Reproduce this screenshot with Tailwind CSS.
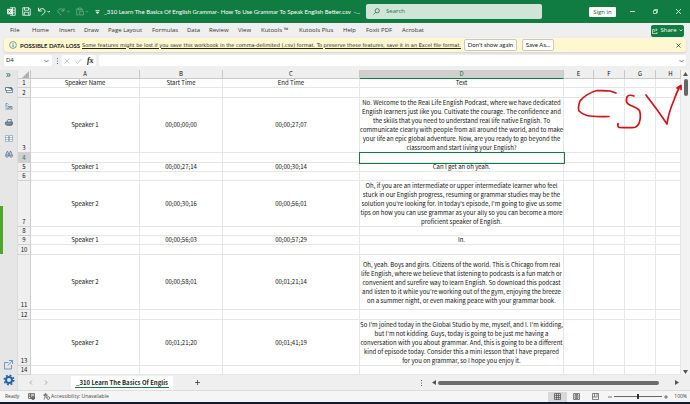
<!DOCTYPE html>
<html lang="en">
  <head>
    <meta charset="UTF-8" />
    <meta name="viewport" content="width=device-width, initial-scale=1.0" />
    <title>_310 Learn The Basics Of English Grammar - Excel</title>
    <script src="https://cdn.jsdelivr.net/npm/@tailwindcss/browser@4"></script>
  </head>

  <body
    class="flex min-h-screen flex-col overflow-hidden bg-[#efefef] font-['Open_Sans','Noto_Sans',sans-serif] text-[7px] leading-[9px] text-[#222]"
  >
    <!-- Title bar -->
    <header class="flex h-[23px] shrink-0 items-center bg-[#107c41] text-white">
      <div class="flex w-[104px] shrink-0 items-center gap-[6px] pl-[7px]">
        <svg class="h-[9px] w-[9px]" viewBox="0 0 18 18" fill="none" stroke="#fff" stroke-width="1.6">
          <path d="M6 1.500h10.500v15H6M11 1.500v15M6 6.500h10M6 11.500h10" />
          <path d="M1 4.500h8.500v9H1z" fill="#fff" />
          <path d="M3 6.500l4 5M7 6.500l-4 5" stroke="#107c41" />
        </svg>
        <button aria-label="Save" class="block">
          <svg class="h-[9px] w-[9px]" viewBox="0 0 18 18" fill="none" stroke="#fff" stroke-width="1.6">
            <path d="M1.500 1.500h12.500l2.500 2.500v12.500h-15zM5 1.500v5h8v-5M4.500 16.500v-6h9v6" />
          </svg>
        </button>
        <button aria-label="Undo" class="block">
          <svg class="h-[9px] w-[14px]" viewBox="0 0 28 18" fill="none" stroke="#fff" stroke-width="1.8">
            <path d="M3 1.500v6.500h6.500M3 8c3-5 8-6 11-3.500s2.500 5.500 0 8L9.500 17M21 8l2.500 2.500L26 8" />
          </svg>
        </button>
        <button aria-label="Redo" class="block opacity-40">
          <svg class="h-[9px] w-[13px]" viewBox="0 0 28 18" fill="none" stroke="#fff" stroke-width="1.800">
            <path d="M15 1.500v6.500H8.500M15 8c-3-5-8-6-11-3.500s-2.500 5.500 0 8L8.500 17M22 8l2.500 2.500L27 8" />
          </svg>
        </button>
        <button aria-label="Paste" class="block opacity-40">
          <svg class="h-[9px] w-[13px]" viewBox="0 0 28 18" fill="none" stroke="#fff" stroke-width="1.600">
            <path d="M6 16.500H1.500v-13H5M11 3.500h3V7M5 1.500h6v4H5zM8 8.500h8v8H8zM21 8l2.500 2.500L26 8" />
          </svg>
        </button>
        <button aria-label="Customize toolbar" class="block">
          <svg class="h-[6px] w-[5px]" viewBox="0 0 10 12" fill="#fff"><path d="M1 2h8v1.500H1zM1 5.500h8L5 10z" /></svg>
        </button>
      </div>
      <div class="flex w-[262px] whitespace-nowrap">
        <span class="font-[Lato,sans-serif] text-[6px]">_310 Learn The Basics Of English Grammar- How To Use Grammar To Speak English Better.csv&nbsp; -...</span>
      </div>
      <label class="flex h-[15px] w-[176px] items-center rounded-[2px] bg-[#cfe5d8] pl-[7px] text-[#185c37]">
        <svg class="h-[7px] w-[7px]" viewBox="0 0 14 14" fill="none" stroke="#185c37" stroke-width="1.400">
          <circle cx="8.500" cy="5.500" r="4.200" /><path d="M5.500 8.500L1 13" />
        </svg>
        <input aria-label="Search" placeholder="Search" class="ml-[6px] w-[120px] bg-transparent text-[6px] placeholder:text-[#28704a]" />
      </label>
      <div class="ml-auto flex items-center pr-[9px]">
        <button class="mr-[14px] h-[10px] w-[27px] rounded-[1px] bg-white text-[6px] leading-[10px] text-[#185c37]">Sign in</button>
        <button aria-label="Minimize" class="mr-[18px] block">
          <svg class="h-[5px] w-[5px]" viewBox="0 0 10 10" stroke="#fff" stroke-width="1.500"><path d="M0 5h10" /></svg>
        </button>
        <button aria-label="Restore" class="mr-[18px] block">
          <svg class="h-[5px] w-[5px]" viewBox="0 0 10 10" fill="none" stroke="#fff" stroke-width="1.300"><path d="M1 3h6v6H1zM3 3V1h6v6H7" /></svg>
        </button>
        <button aria-label="Close" class="block">
          <svg class="h-[5px] w-[5px]" viewBox="0 0 10 10" stroke="#fff" stroke-width="1.500"><path d="M0 0l10 10M10 0L0 10" /></svg>
        </button>
      </div>
    </header>

    <!-- Ribbon tabs -->
    <nav class="flex h-[15px] shrink-0 items-center gap-[11px] pr-[6px] pl-[10px] text-[6px] whitespace-nowrap text-[#333]">
      <a href="#" class="w-[11px]">File</a>
      <a href="#" class="w-[16px]">Home</a>
      <a href="#" class="w-[14px]">Insert</a>
      <a href="#" class="w-[13px]">Draw</a>
      <a href="#" class="w-[33px]">Page Layout</a>
      <a href="#" class="w-[24px]">Formulas</a>
      <a href="#" class="w-[11px]">Data</a>
      <a href="#" class="w-[18px]">Review</a>
      <a href="#" class="w-[12px]">View</a>
      <a href="#" class="w-[27px]">Kutools ™</a>
      <a href="#" class="w-[33px]">Kutools Plus</a>
      <a href="#" class="w-[12px]">Help</a>
      <a href="#" class="w-[25px]">Foxit PDF</a>
      <a href="#">Acrobat</a>
      <button class="ml-auto flex h-[12px] w-[33px] items-center justify-center gap-[2px] rounded-[2px] bg-[#107c41] text-white">
        <svg class="h-[6px] w-[6px]" viewBox="0 0 12 12" fill="none" stroke="#fff" stroke-width="1.300">
          <path d="M5 3H1v8h9V8M4 8c0-3 2-4.500 5-4.500M7.500 1l3 2.500-3 2.500" />
        </svg>
        Share
        <svg class="h-[3px] w-[4px]" viewBox="0 0 8 6" fill="none" stroke="#fff" stroke-width="1.400"><path d="M1 1l3 3 3-3" /></svg>
      </button>
    </nav>

    <!-- Message bar -->
    <section class="mr-[4px] ml-[4px] flex h-[14px] shrink-0 items-center rounded-[3px] bg-[#fdf8cf] pr-[5px] pl-[5px] font-[Lato,sans-serif] text-[6px] whitespace-nowrap shadow-sm">
      <svg class="h-[8px] w-[8px]" viewBox="0 0 16 16" fill="none" stroke="#2b7a9b" stroke-width="1.300">
        <circle cx="8" cy="8" r="6.800" /><path d="M8 7v5M8 4v1.500" stroke-width="1.800" />
      </svg>
      <strong class="ml-[3px] w-[62px] font-bold">POSSIBLE DATA LOSS</strong>
      <a href="#" class="w-[382px] font-['DejaVu_Sans',sans-serif] text-[5px] underline">Some features might be lost if you save this workbook in the comma-delimited (.csv) format. To preserve these features, save it in an Excel file format.</a>
      <button class="h-[12px] w-[53px] rounded-[2px] border border-[#c8c8c8] bg-white leading-[10px]">Don't show again</button>
      <button class="ml-[5px] h-[12px] w-[32px] rounded-[2px] border border-[#c8c8c8] bg-white leading-[10px]">Save As...</button>
      <button aria-label="Dismiss" class="ml-auto block">
        <svg class="h-[5px] w-[5px]" viewBox="0 0 10 10" stroke="#333" stroke-width="1.500"><path d="M1 1l8 8M9 1L1 9" /></svg>
      </button>
    </section>

    <!-- Formula bar -->
    <section class="flex h-[18px] shrink-0 items-center pr-[4px] pb-px pl-[4px]">
      <div class="flex h-[11px] w-[48px] items-center rounded-[2px] bg-white pr-[3px] pl-[2px]">
        <input aria-label="Name box" value="D4" class="w-[30px] text-[6px]" />
        <svg class="ml-auto h-[4px] w-[5px]" viewBox="0 0 10 8" fill="none" stroke="#444" stroke-width="1.400"><path d="M1 2l4 4 4-4" /></svg>
      </div>
      <svg class="mr-[3px] ml-[4px] h-[8px] w-[3px]" viewBox="0 0 6 16" fill="#555"><circle cx="3" cy="3" r="1.100" /><circle cx="3" cy="8" r="1.100" /><circle cx="3" cy="13" r="1.100" /></svg>
      <div class="flex h-[11px] w-[34px] items-center justify-around rounded-[2px] bg-white">
        <svg class="h-[6px] w-[6px]" viewBox="0 0 12 12" stroke="#aaa" stroke-width="1.300"><path d="M1 1l10 10M11 1L1 11" /></svg>
        <svg class="h-[6px] w-[7px]" viewBox="0 0 14 12" fill="none" stroke="#aaa" stroke-width="1.300"><path d="M1 7l4 4 8-9" /></svg>
        <span class="font-['Liberation_Serif',serif] text-[8px] font-bold italic">fx</span>
      </div>
      <label class="ml-[3px] flex h-[11px] flex-1 items-center rounded-[2px] bg-white pr-[2px]">
        <input aria-label="Formula" class="min-w-0 flex-1" />
        <svg class="h-[4px] w-[5px]" viewBox="0 0 10 8" fill="none" stroke="#444" stroke-width="1.400"><path d="M1 2l4 4 4-4" /></svg>
      </label>
    </section>

    <main class="flex flex-1">
      <!-- Kutools side pane -->
      <aside class="relative flex w-[18px] shrink-0 flex-col items-center border-r border-[#dcdcdc] bg-[#e6e6e6] pt-[2px] pb-[4px]">
        <svg class="mb-[9px] h-[6px] w-[5px]" viewBox="0 0 10 12" fill="none" stroke="#168a4a" stroke-width="2"><path d="M1 2l3.500 4L1 10M5 2l3.500 4L5 10" /></svg>
        <svg class="mb-[10px] h-[6px] w-[8px]" viewBox="0 0 16 12" fill="#fff" stroke="#41668f" stroke-width="1.400"><path d="M3 3h12v8H3z" /><path d="M1 1h12v3H1z" fill="#41668f" /><path d="M1 1v6h12V4" /></svg>
        <svg class="mb-[9px] h-[7px] w-[8px]" viewBox="0 0 16 14" fill="none" stroke="#52708f" stroke-width="1.400"><path d="M2 1h3M2 1v8M5 5l2-2M1 12h14M6 12V7h8v5M8 9h4" /></svg>
        <svg class="mb-[9px] h-[7px] w-[8px]" viewBox="0 0 16 14" fill="none" stroke="#4b5d70" stroke-width="1.400"><path d="M4 6l2-5h7l-1 5" /><path d="M1 6h13v5H1z" fill="#7f93a8" /><path d="M3 13h10l2-3V5" /></svg>
        <svg class="mb-[8px] h-[7px] w-[8px]" viewBox="0 0 16 14" fill="#fff" stroke="#7890a8" stroke-width="1.200"><path d="M1 1h6v12H1zM9 1h6v12H9zM1 5h14M1 9h14" /></svg>
        <svg class="h-[8px] w-[8px]" viewBox="0 0 16 16" fill="none" stroke="#526f8d" stroke-width="1.500"><path d="M4 3h2l1 9M12 3h-2L9 12M4 3l-3 9M12 3l3 9M7 7h2" /><circle cx="4" cy="12" r="2.500" /><circle cx="12" cy="12" r="2.500" /></svg>
        <svg class="mt-auto mb-[4px] h-[10px] w-[9px]" viewBox="0 0 18 20" fill="none" stroke="#4a7fb5" stroke-width="1.500"><path d="M9 5H1v13h14v-8M10 1h7v7M17 1L8 11" /></svg>
        <svg class="h-[12px] w-[12px]" viewBox="0 0 24 24" fill="none" stroke="#1f62a8">
          <circle cx="12" cy="12" r="6" stroke-width="4" />
          <circle cx="12" cy="12" r="9.500" stroke-width="3" stroke-dasharray="3.700 3.760" />
        </svg>
        <div class="absolute top-[136px] left-0 h-[48px] w-[3px] bg-[#4ea72a]"></div>
      </aside>

      <div class="flex min-w-0 flex-1 flex-col">
        <div class="flex">
          <div class="relative min-w-0 flex-1">
            <table
              class="w-full table-fixed border-separate border-spacing-0 bg-white text-center font-['Noto_Sans_CJK_SC',sans-serif] text-[6px] whitespace-nowrap text-[#111] [&_tbody_td]:border-r [&_tbody_td]:border-b [&_tbody_td]:border-[#e6e6e6] [&_tbody_td]:p-0 [&_tbody_th]:border-r [&_tbody_th]:border-b [&_tbody_th]:border-[#cfcfcf] [&_tbody_th]:bg-[#efefef] [&_tbody_th]:p-0 [&_tbody_th]:align-bottom [&_tbody_th]:font-normal [&_tbody_th]:leading-[8px] [&_td]:leading-[8px]"
            >
              <colgroup>
                <col class="w-[13px]" />
                <col class="w-[109px]" />
                <col class="w-[83px]" />
                <col class="w-[137px]" />
                <col class="w-[204px]" />
                <col class="w-[30px]" />
                <col class="w-[31px]" />
                <col class="w-[31px]" />
                <col />
              </colgroup>
              <thead>
                <tr class="h-[9px] bg-[#efefef] [&_th]:border-r [&_th]:border-b [&_th]:border-[#c8c8c8] [&_th]:p-0 [&_th]:leading-[8px] [&_th]:font-normal">
                  <th aria-label="Select all">
                    <svg class="ml-auto h-[7px] w-[8px]" viewBox="0 0 8 7" fill="#b0b0b0"><path d="M7 0v7H0z" /></svg>
                  </th>
                  <th>A</th>
                  <th>B</th>
                  <th>C</th>
                  <th class="border-b-[#107c41]! bg-[#d0d0d0] text-[#107c41]">D</th>
                  <th>E</th>
                  <th>F</th>
                  <th>G</th>
                  <th class="pl-[5px]!">H</th>
                </tr>
              </thead>
              <tbody>
                <tr class="h-[9px]"><th>1</th><td>Speaker Name</td><td>Start Time</td><td>End Time</td><td>Text</td><td></td><td></td><td></td><td></td></tr>
                <tr class="h-[10px]"><th>2</th><td></td><td></td><td></td><td></td><td></td><td></td><td></td><td></td></tr>
                <tr class="h-[55px]">
                  <th>3</th><td>Speaker 1</td><td>00;00;00;00</td><td>00;00;27;07</td>
                  <td class="leading-[9px]!">
                    No. Welcome to the Real Life English Podcast, where we have dedicated<br />
                    English learners just like you. Cultivate the courage. The confidence and<br />
                    the skills that you need to understand real life native English. To<br />
                    communicate clearly with people from all around the world, and to make<br />
                    your life an epic global adventure. Now, are you ready to go beyond the<br />
                    classroom and start living your English?
                  </td>
                  <td></td><td></td><td></td><td></td>
                </tr>
                <tr class="h-[10px]">
                  <th class="bg-[#d0d0d0]! text-[#107c41]">4</th><td></td><td></td><td></td>
                  <td class="outline outline-[#107c41]"></td>
                  <td></td><td></td><td></td><td></td>
                </tr>
                <tr class="h-[9px]"><th>5</th><td>Speaker 1</td><td>00;00;27;14</td><td>00;00;30;14</td><td>Can I get an oh yeah.</td><td></td><td></td><td></td><td></td></tr>
                <tr class="h-[9px]"><th>6</th><td></td><td></td><td></td><td></td><td></td><td></td><td></td><td></td></tr>
                <tr class="h-[46px]">
                  <th>7</th><td>Speaker 2</td><td>00;00;30;16</td><td>00;00;56;01</td>
                  <td class="leading-[9px]!">
                    Oh, if you are an intermediate or upper intermediate learner who feel<br />
                    stuck in our English progress, resuming or grammar studies may be the<br />
                    solution you're looking for. In today's episode, I'm going to give us some<br />
                    tips on how you can use grammar as your ally so you can become a more<br />
                    proficient speaker of English.
                  </td>
                  <td></td><td></td><td></td><td></td>
                </tr>
                <tr class="h-[9px]"><th>8</th><td></td><td></td><td></td><td></td><td></td><td></td><td></td><td></td></tr>
                <tr class="h-[9px]"><th>9</th><td>Speaker 1</td><td>00;00;56;03</td><td>00;00;57;29</td><td>In.</td><td></td><td></td><td></td><td></td></tr>
                <tr class="h-[10px]"><th>10</th><td></td><td></td><td></td><td></td><td></td><td></td><td></td><td></td></tr>
                <tr class="h-[55px]">
                  <th>11</th><td>Speaker 2</td><td>00;00;58;01</td><td>00;01;21;14</td>
                  <td class="leading-[9px]!">
                    Oh, yeah. Boys and girls. Citizens of the world. This is Chicago from real<br />
                    life English, where we believe that listening to podcasts is a fun match or<br />
                    convenient and surefire way to learn English. So download this podcast<br />
                    and listen to it while you're working out of the gym, enjoying the breeze<br />
                    on a summer night, or even making peace with your grammar book.
                  </td>
                  <td></td><td></td><td></td><td></td>
                </tr>
                <tr class="h-[10px]"><th>12</th><td></td><td></td><td></td><td></td><td></td><td></td><td></td><td></td></tr>
                <tr class="h-[46px]">
                  <th>13</th><td>Speaker 2</td><td>00;01;21;20</td><td>00;01;41;19</td>
                  <td class="leading-[9px]!">
                    So I'm joined today in the Global Studio by me, myself, and I. I'm kidding,<br />
                    but I'm not kidding. Guys, today is going to be just me having a<br />
                    conversation with you about grammar. And, this is going to be a different<br />
                    kind of episode today. Consider this a mini lesson that I have prepared<br />
                    for you on grammar, so I hope you enjoy it.
                  </td>
                  <td></td><td></td><td></td><td></td>
                </tr>
                <tr class="h-[9px]"><th>14</th><td></td><td></td><td></td><td></td><td></td><td></td><td></td><td></td></tr>
              </tbody>
            </table>
            <!-- Ink annotation -->
            <svg class="absolute top-[14px] left-[557px] h-[48px] w-[110px]" viewBox="575 84 110 48" fill="none" stroke="#d01317" stroke-width="1.700" stroke-linecap="round" stroke-linejoin="round">
              <path d="M616 93l-6-2c-6 0-9-.5-13-.5-6 1.500-14 6-17 10.500-1.500 4-2 7-1 10 3 3 5 3.500 8 4.500 6 1.500 14 1 22 1" />
              <path d="M634 96c-3-1-6-1-7 1-1 3-1 6 2 7.500 4 2 8 3 10.500 6 1.500 5 1 9-.5 13-2 3-3 4-5 4-5 .5-10 0-15 0-1.500-1-1.500-2-1-4" />
              <path d="M646 95l12 16 9 13c1-8 4-17 7-24 2-6 4-10 6-14M677 88l4-2.500v4" />
            </svg>
          </div>
          <!-- Vertical scrollbar -->
          <div class="flex w-[9px] shrink-0 flex-col items-center bg-[#f3f3f3] pt-[2px] pb-[1px]">
            <svg class="h-[4px] w-[5px]" viewBox="0 0 10 8" fill="#555"><path d="M5 0l5 8H0z" /></svg>
            <div class="mt-[3px] h-[17px] w-[4px] rounded-full bg-[#666]"></div>
            <svg class="mt-auto h-[4px] w-[5px]" viewBox="0 0 10 8" fill="#555"><path d="M0 0h10L5 8z" /></svg>
          </div>
        </div>

        <!-- Sheet tabs -->
        <div class="flex h-[15px] items-center text-[6px]">
          <button aria-label="Previous sheet" class="ml-[11px] block">
            <svg class="h-[5px] w-[4px]" viewBox="0 0 8 10" fill="none" stroke="#888" stroke-width="1.400"><path d="M6 1L2 5l4 4" /></svg>
          </button>
          <button aria-label="Next sheet" class="ml-[11px] block">
            <svg class="h-[5px] w-[4px]" viewBox="0 0 8 10" fill="none" stroke="#888" stroke-width="1.400"><path d="M2 1l4 4-4 4" /></svg>
          </button>
          <button class="ml-[23px] h-[14px] w-[102px] rounded-b-[3px] bg-white px-[4px] font-['Noto_Sans_CJK_SC',sans-serif] font-bold">
            <span class="block border-b border-[#107c41] whitespace-nowrap">_310 Learn The Basics Of Englis</span>
          </button>
          <button aria-label="New sheet" class="ml-[22px] block">
            <svg class="h-[5px] w-[5px]" viewBox="0 0 10 10" stroke="#333" stroke-width="1.500"><path d="M5 0v10M0 5h10" /></svg>
          </button>
          <svg class="ml-auto h-[8px] w-[3px]" viewBox="0 0 6 16" fill="#444"><circle cx="3" cy="3" r="1.100" /><circle cx="3" cy="8" r="1.100" /><circle cx="3" cy="13" r="1.100" /></svg>
          <svg class="ml-[9px] h-[5px] w-[4px]" viewBox="0 0 8 10" fill="#555"><path d="M8 0v10L0 5z" /></svg>
          <div class="ml-[2px] h-[4px] w-[221px] rounded-full bg-[#6b6b6b]"></div>
          <svg class="mr-[11px] ml-[16px] h-[5px] w-[4px]" viewBox="0 0 8 10" fill="#555"><path d="M0 0v10l8-5z" /></svg>
        </div>
      </div>
    </main>

    <!-- Status bar -->
    <footer class="flex h-[14px] shrink-0 items-center border-t border-b-2 border-t-[#dcdcdc] border-b-[#111a2e] bg-[#f5f5f5] pr-[3px] pl-[5px] text-[5px] whitespace-nowrap text-[#444]">
      <span class="w-[23px]">Ready</span>
      <svg class="h-[7px] w-[7px]" viewBox="0 0 14 14" fill="none" stroke="#444" stroke-width="1.300"><path d="M1 1h12v10H1zM1 4h12M1 7h6M5 1v10" /><circle cx="10" cy="10" r="3" fill="#777" /></svg>
      <svg class="mr-[1px] ml-[8px] h-[7px] w-[7px]" viewBox="0 0 14 14" fill="none" stroke="#444" stroke-width="1.300"><circle cx="5" cy="2" r="1.300" /><path d="M1 4l3 1v3l-2 5M9 4L6 5v3l1 2M1 4h8" /><circle cx="10.500" cy="10" r="2.800" /></svg>
      <span>Accessibility: Unavailable</span>
      <div class="ml-auto flex items-center">
        <button aria-label="Normal view" class="flex h-[10px] w-[19px] items-center justify-center bg-[#d9d9d9]">
          <svg class="h-[7px] w-[7px]" viewBox="0 0 14 14" fill="none" stroke="#444" stroke-width="1.300"><path d="M1 1h12v12H1zM5 1v12M9 1v12M1 5h12M1 9h12" /></svg>
        </button>
        <button aria-label="Page layout view" class="ml-[6px] block">
          <svg class="h-[7px] w-[7px]" viewBox="0 0 14 14" fill="none" stroke="#444" stroke-width="1.300"><path d="M1 1h12v12H1zM4 3h6v8H4zM5 5h4M5 7h4M5 9h4" /></svg>
        </button>
        <button aria-label="Page break view" class="ml-[12px] block">
          <svg class="h-[7px] w-[7px]" viewBox="0 0 14 14" fill="none" stroke="#444" stroke-width="1.300"><path d="M1 1h12v12H1zM5 1v7h5V1M1 8h4" /></svg>
        </button>
        <svg class="ml-[9px] h-[4px] w-[4px]" viewBox="0 0 8 8" stroke="#444" stroke-width="1.400"><path d="M0 4h8" /></svg>
        <input
          type="range"
          aria-label="Zoom"
          class="mx-[2px] h-[6px] w-[48px] appearance-none bg-transparent [&::-webkit-slider-runnable-track]:h-px [&::-webkit-slider-runnable-track]:bg-[#666] [&::-webkit-slider-thumb]:-mt-[2px] [&::-webkit-slider-thumb]:h-[5px] [&::-webkit-slider-thumb]:w-[2px] [&::-webkit-slider-thumb]:appearance-none [&::-webkit-slider-thumb]:bg-[#333]"
        />
        <svg class="mr-[6px] h-[4px] w-[4px]" viewBox="0 0 8 8" stroke="#444" stroke-width="1.400"><path d="M0 4h8M4 0v8" /></svg>
        <span>100%</span>
      </div>
    </footer>
  </body>
</html>
